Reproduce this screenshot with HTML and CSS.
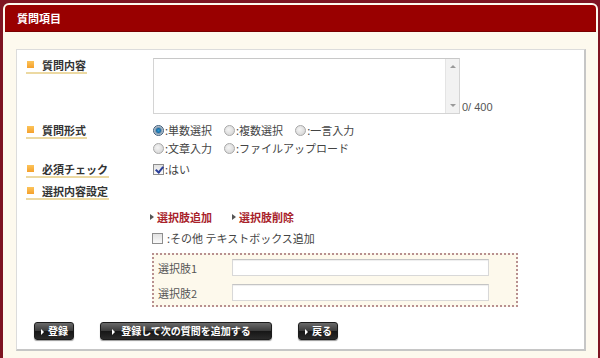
FILE: index.html
```html
<!DOCTYPE html>
<html lang="ja">
<head>
    <meta charset="UTF-8">
    <title>質問項目</title>
    <link rel="stylesheet" href="styles.css">
</head>
<body>
    <div class="window">
        <div class="window-title">質問項目</div>
        <div class="window-body">
            <div class="panel">
                <div class="row row-content">
                    <div class="row-label"><span class="label">質問内容</span></div>
                    <div class="row-field">
                        <div class="text-wrap">
                            <textarea class="question-text"></textarea>
                            <div class="scrollbar">
                                <span class="arrow-up"></span>
                                <span class="arrow-down"></span>
                            </div>
                        </div>
                        <span class="counter">0/ 400</span>
                    </div>
                </div>

                <div class="row row-type">
                    <div class="row-label"><span class="label">質問形式</span></div>
                    <div class="row-field options">
                        <div class="option-line">
                            <span class="choice"><span class="radio checked"></span>:単数選択</span>
                            <span class="choice"><span class="radio"></span>:複数選択</span>
                            <span class="choice"><span class="radio"></span>:一言入力</span>
                        </div>
                        <div class="option-line">
                            <span class="choice"><span class="radio"></span>:文章入力</span>
                            <span class="choice"><span class="radio"></span>:ファイルアップロード</span>
                        </div>
                    </div>
                </div>

                <div class="row row-required">
                    <div class="row-label"><span class="label">必須チェック</span></div>
                    <div class="row-field">
                        <span class="choice"><span class="checkbox checked"></span>:はい</span>
                    </div>
                </div>

                <div class="row row-settings">
                    <div class="row-label"><span class="label">選択内容設定</span></div>
                </div>

                <div class="settings">
                    <div class="links">
                        <a class="link" href="#">選択肢追加</a>
                        <a class="link" href="#">選択肢削除</a>
                    </div>
                    <div class="other-line">
                        <span class="checkbox"></span>
                        <span class="other-text">:その他 テキストボックス追加</span>
                    </div>
                    <div class="choice-box">
                        <div class="choice-row">
                            <span class="choice-name">選択肢1</span>
                            <input class="choice-input" type="text">
                        </div>
                        <div class="choice-row">
                            <span class="choice-name">選択肢2</span>
                            <input class="choice-input" type="text">
                        </div>
                    </div>
                </div>

                <div class="buttons">
                    <button class="btn btn-short">登録</button>
                    <button class="btn btn-long">登録して次の質問を追加する</button>
                    <button class="btn btn-short">戻る</button>
                </div>
            </div>
        </div>
    </div>
</body>
</html>
```

FILE: styles.css
```css
body {
    margin: 0;
    height: 358px;
    overflow: hidden;
    background-color: #7e1422;
    font-family: "Noto Sans CJK JP", "Liberation Sans", sans-serif;
    font-size: 11px;
    color: #333;
}

.window {
    margin: 3px 2px 0 3px;
    padding: 2px 2px 0 2px;
    height: 353px;
    background-color: #fdf9ee;
    border-radius: 6px 6px 0 0;
}

.window-title {
    height: 26px;
    line-height: 26px;
    padding-left: 12px;
    background-color: #990000;
    border-radius: 4px 4px 0 0;
    border-bottom: 1px solid #7a0000;
    color: #fff;
    font-weight: bold;
    font-size: 11px;
}

.window-body {
    padding: 17px 10px 0 11px;
}

.panel {
    background-color: #fff;
    border: 1px solid #dcdcdc;
    border-right: 2px solid #c6c6c6;
    border-bottom: 2px solid #c6c6c6;
    padding: 7px 0 9px 9px;
}

.row {
    display: flex;
}

.row-label {
    width: 127px;
    flex-shrink: 0;
}

.label {
    display: inline-block;
    position: relative;
    padding-left: 16px;
    padding-right: 1px;
    line-height: 14px;
    font-weight: bold;
    color: #333;
    border-bottom: 2px solid #ecd9a2;
}

.label::before {
    content: "";
    position: absolute;
    left: 1px;
    top: 3px;
    width: 7px;
    height: 7px;
    background: linear-gradient(#fcc45a, #f5a02c);
}

.row-field {
    display: flex;
    align-items: flex-end;
}

.text-wrap {
    position: relative;
    margin-top: 1px;
}

.question-text {
    display: block;
    width: 307px;
    height: 56px;
    margin: 0;
    padding: 2px 16px 2px 2px;
    box-sizing: border-box;
    border: 1px solid #d4d4d4;
    border-top-color: #c8c8c8;
    resize: none;
}

.scrollbar {
    position: absolute;
    top: 1px;
    right: 1px;
    bottom: 1px;
    width: 13px;
    background-color: #f2f2f2;
    border-left: 1px solid #e4e4e4;
}

.arrow-up,
.arrow-down {
    position: absolute;
    left: 4px;
    border-left: 3px solid transparent;
    border-right: 3px solid transparent;
}

.arrow-up {
    top: 6px;
    border-bottom: 3px solid #9a9a9a;
}

.arrow-down {
    bottom: 6px;
    border-top: 3px solid #9a9a9a;
}

.counter {
    margin-left: 2px;
    line-height: 14px;
    font-family: "Liberation Sans", sans-serif;
    color: #555;
}

.row-type {
    margin-top: 7px;
}

.row-type .label,
.row-required .label,
.row-settings .label {
    margin-top: 2px;
}

.options {
    flex-direction: column;
    align-items: flex-start;
}

.option-line {
    display: flex;
    line-height: 18px;
}

.choice {
    display: inline-flex;
    align-items: center;
    margin-right: 12px;
    color: #444;
    line-height: 18px;
}

.radio {
    display: inline-block;
    width: 9px;
    height: 9px;
    margin-right: 1px;
    border: 1px solid #a8a8a8;
    border-radius: 50%;
    background: radial-gradient(circle at 40% 40%, #f4f4f4, #cfcfcf);
}

.radio.checked {
    border-color: #3c5a78;
    background: radial-gradient(circle, #2fa0d8 0, #1a6ea8 2px, #7d96ac 3px, #dde4ea 5px);
}

.checkbox {
    display: inline-block;
    position: relative;
    width: 9px;
    height: 9px;
    margin-right: 1px;
    border: 1px solid #8e8e8e;
    background: linear-gradient(#e2e2e2, #fafafa);
}

.checkbox.checked::after {
    content: "";
    position: absolute;
    left: 3px;
    top: 0px;
    width: 3px;
    height: 6px;
    border-right: 2px solid #2a3f9a;
    border-bottom: 2px solid #2a3f9a;
    transform: rotate(40deg);
}

.row-required {
    margin-top: 3px;
}

.row-settings {
    margin-top: 4px;
    height: 18px;
}

.settings {
    margin-left: 124px;
}

.links {
    display: flex;
    gap: 20px;
    margin-top: 8px;
    line-height: 18px;
}

.link {
    position: relative;
    padding-left: 7px;
    color: #a8222a;
    font-weight: bold;
    text-decoration: none;
}

.link::before {
    content: "";
    position: absolute;
    left: 0;
    top: 6px;
    border-left: 4px solid #555;
    border-top: 3px solid transparent;
    border-bottom: 3px solid transparent;
}

.other-line {
    display: flex;
    align-items: center;
    margin-top: 3px;
    margin-left: 2px;
    line-height: 18px;
}

.other-text {
    margin-left: 3px;
    color: #444;
}

.choice-box {
    width: 358px;
    margin: 6px 0 0 2px;
    padding: 4px 0 4px 4px;
    border: 2px dotted #b89090;
    background-color: #fdf9ec;
}

.choice-row {
    display: flex;
    align-items: center;
    height: 17px;
}

.choice-row + .choice-row {
    margin-top: 8px;
}

.choice-name {
    width: 74px;
    color: #555;
}

.choice-input {
    width: 257px;
    height: 17px;
    margin: 0;
    padding: 0 2px;
    box-sizing: border-box;
    border: 1px solid #d8d8d8;
    border-top-color: #c4c4c4;
    background-color: #fff;
    box-shadow: inset 0 1px 1px #eee;
}

.buttons {
    display: flex;
    gap: 26px;
    margin: 15px 0 0 8px;
}

.btn {
    position: relative;
    height: 18px;
    padding: 0 0 0 8px;
    border: 1px solid #1c1c1c;
    border-radius: 3px;
    background: linear-gradient(#6a6a6a, #3a3a3a 50%, #161616 51%, #2a2a2a);
    color: #fff;
    font-family: "Noto Sans CJK JP", sans-serif;
    font-size: 10px;
    font-weight: bold;
    line-height: 16px;
    box-shadow: 0 1px 1px #999;
}

.btn::before {
    content: "";
    position: absolute;
    top: 6px;
    border-left: 3px solid #fff;
    border-top: 3px solid transparent;
    border-bottom: 3px solid transparent;
}

.btn-short {
    width: 40px;
}

.btn-short::before {
    left: 6px;
}

.btn-long {
    width: 172px;
    padding-left: 0;
}

.btn-long::before {
    left: 11px;
}
```
